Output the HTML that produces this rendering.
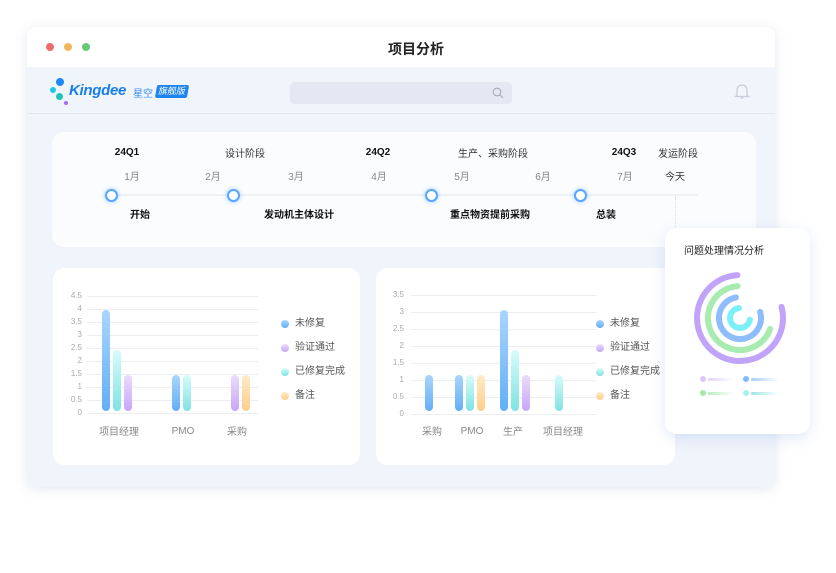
<!DOCTYPE html>
<html><head><meta charset="utf-8"><style>
*{margin:0;padding:0;box-sizing:border-box}
body{width:836px;height:573px;background:#fff;position:relative;overflow:hidden;font-family:"Liberation Sans","Noto Sans CJK SC",sans-serif}
.a{position:absolute}
.t{position:absolute;white-space:nowrap;transform:translateX(-50%);font-size:10px;color:#333;line-height:12px}
.b{font-weight:bold;color:#111}
.m{color:#888}
.ax{position:absolute;font-size:8px;color:#aaa;text-align:right;width:20px;line-height:8px}
.gl{position:absolute;height:1px;background:#eceef2}
.bar{position:absolute;width:8px;border-radius:4px}
.bl{background:linear-gradient(#a9d6fb,#62aef7)}
.cy{background:linear-gradient(#d8fbfb,#7ee3e2)}
.pu{background:linear-gradient(#ebdcfb,#c7a6f9)}
.or{background:linear-gradient(#ffebc8,#ffcd8a)}
.lg{position:absolute;font-size:10px;color:#555;line-height:12px;white-space:nowrap}
.dot{position:absolute;width:8px;height:8px;border-radius:50%}
.xl{position:absolute;font-size:10px;color:#888;transform:translateX(-50%);white-space:nowrap;line-height:14px;height:14px}
.c{position:absolute;width:13px;height:13px;border-radius:50%;background:#fff;border:2px solid #58a6ff;box-shadow:0 0 5px #9cc9ff}
</style></head><body>
<div class="a" style="left:27px;top:27px;width:748px;height:460px;background:#f0f4fb;border-radius:8px;box-shadow:0 2px 12px rgba(120,140,180,.2);overflow:hidden">
 <div class="a" style="left:0;top:0;width:748px;height:40px;background:#fff"></div>
 <div class="a" style="left:19px;top:16px;width:8px;height:8px;border-radius:50%;background:#ef6a6a"></div>
 <div class="a" style="left:37px;top:16px;width:8px;height:8px;border-radius:50%;background:#f2b55b"></div>
 <div class="a" style="left:55px;top:16px;width:8px;height:8px;border-radius:50%;background:#66c974"></div>
 <div class="a" style="left:361px;top:12px;font-size:14px;font-weight:bold;color:#222">项目分析</div>
 <div class="a" style="left:0;top:86px;width:748px;height:1px;background:#e2e7f0"></div>
 <div class="a" style="left:263px;top:55px;width:222px;height:22px;border-radius:5px;background:#e3e8f2"></div>
 <svg class="a" style="left:465px;top:60px" width="12" height="12"><circle cx="5" cy="5" r="3.8" fill="none" stroke="#aab" stroke-width="1.1"/><path d="M8 8L11 11" stroke="#aab" stroke-width="1.1"/></svg>
 <svg class="a" style="left:707px;top:55px" width="16" height="18"><path d="M3 13V8a5 5 0 0 1 10 0v5l1.5 1.5h-13z M6.5 16h3" fill="none" stroke="#c8cfdc" stroke-width="1.3"/></svg>
</div>
<!-- logo -->
<div class="a" style="left:56px;top:78px;width:8px;height:8px;border-radius:50%;background:#1e88f3"></div>
<div class="a" style="left:50px;top:87px;width:6px;height:6px;border-radius:50%;background:#20c6e6"></div>
<div class="a" style="left:56px;top:93px;width:7px;height:7px;border-radius:50%;background:#1ec4b8"></div>
<div class="a" style="left:64px;top:101px;width:4px;height:4px;border-radius:50%;background:#a86bf2"></div>
<div class="a" style="left:69px;top:82px;font-size:15px;font-weight:bold;font-style:italic;color:#1a7ee8;letter-spacing:-.3px">Kingdee</div>
<div class="a" style="left:133px;top:85px;font-size:10px;color:#3b8fe8">星空</div>
<div class="a" style="left:156px;top:85px;width:32px;height:13px;background:#1e84ee;border-radius:2px;transform:skewX(-10deg);font-size:9px;color:#fff;text-align:center;line-height:13px">旗舰版</div>
<!-- timeline card -->
<div class="a" style="left:52px;top:132px;width:704px;height:115px;background:#fbfcfe;border-radius:12px"></div>
<div class="a" style="left:110px;top:194px;width:588px;height:2px;background:#eef1f6"></div>
<div class="a" style="left:675px;top:196px;width:0;height:52px;border-left:1px dotted #dde"></div>
<div class="c" style="left:105px;top:189px"></div>
<div class="c" style="left:227px;top:189px"></div>
<div class="c" style="left:425px;top:189px"></div>
<div class="c" style="left:574px;top:189px"></div>
<div class="t b" style="left:127px;top:147px">24Q1</div>
<div class="t" style="left:245px;top:149px">设计阶段</div>
<div class="t b" style="left:378px;top:147px">24Q2</div>
<div class="t" style="left:493px;top:149px">生产、采购阶段</div>
<div class="t b" style="left:624px;top:147px">24Q3</div>
<div class="t" style="left:678px;top:149px">发运阶段</div>
<div class="t m" style="left:132px;top:172px">1月</div>
<div class="t m" style="left:213px;top:172px">2月</div>
<div class="t m" style="left:296px;top:172px">3月</div>
<div class="t m" style="left:379px;top:172px">4月</div>
<div class="t m" style="left:462px;top:172px">5月</div>
<div class="t m" style="left:543px;top:172px">6月</div>
<div class="t m" style="left:625px;top:172px">7月</div>
<div class="t" style="left:675px;top:172px">今天</div>
<div class="t b" style="left:140px;top:210px">开始</div>
<div class="t b" style="left:299px;top:210px">发动机主体设计</div>
<div class="t b" style="left:490px;top:210px">重点物资提前采购</div>
<div class="t b" style="left:606px;top:210px">总装</div>
<!-- chart 1 -->
<div class="a" style="left:53px;top:268px;width:307px;height:197px;background:#fff;border-radius:12px"></div>
<div class="gl" style="left:87px;top:296px;width:172px"></div><div class="ax" style="left:62px;top:292px">4.5</div>
<div class="gl" style="left:87px;top:309px;width:172px"></div><div class="ax" style="left:62px;top:305px">4</div>
<div class="gl" style="left:87px;top:322px;width:172px"></div><div class="ax" style="left:62px;top:318px">3.5</div>
<div class="gl" style="left:87px;top:335px;width:172px"></div><div class="ax" style="left:62px;top:331px">3</div>
<div class="gl" style="left:87px;top:348px;width:172px"></div><div class="ax" style="left:62px;top:344px">2.5</div>
<div class="gl" style="left:87px;top:361px;width:172px"></div><div class="ax" style="left:62px;top:357px">2</div>
<div class="gl" style="left:87px;top:374px;width:172px"></div><div class="ax" style="left:62px;top:370px">1.5</div>
<div class="gl" style="left:87px;top:387px;width:172px"></div><div class="ax" style="left:62px;top:383px">1</div>
<div class="gl" style="left:87px;top:400px;width:172px"></div><div class="ax" style="left:62px;top:396px">0.5</div>
<div class="gl" style="left:87px;top:413px;width:172px"></div><div class="ax" style="left:62px;top:409px">0</div>
<div class="bar bl" style="left:102px;top:310px;height:101px"></div>
<div class="bar cy" style="left:113px;top:350px;height:61px"></div>
<div class="bar pu" style="left:124px;top:375px;height:36px"></div>
<div class="bar bl" style="left:172px;top:375px;height:36px"></div>
<div class="bar cy" style="left:183px;top:375px;height:36px"></div>
<div class="bar pu" style="left:231px;top:375px;height:36px"></div>
<div class="bar or" style="left:242px;top:375px;height:36px"></div>
<div class="xl" style="left:119px;top:426px">项目经理</div>
<div class="xl" style="left:183px;top:424px;padding-top:1px">PMO</div>
<div class="xl" style="left:237px;top:426px">采购</div>
<div class="dot bl" style="left:281px;top:320px"></div><div class="lg" style="left:295px;top:318px">未修复</div>
<div class="dot pu" style="left:281px;top:344px"></div><div class="lg" style="left:295px;top:342px">验证通过</div>
<div class="dot cy" style="left:281px;top:368px"></div><div class="lg" style="left:295px;top:366px">已修复完成</div>
<div class="dot or" style="left:281px;top:392px"></div><div class="lg" style="left:295px;top:390px">备注</div>
<!-- chart 2 -->
<div class="a" style="left:376px;top:268px;width:299px;height:197px;background:#fff;border-radius:12px"></div>
<div class="gl" style="left:411px;top:295px;width:185px"></div><div class="ax" style="left:384px;top:291px">3.5</div>
<div class="gl" style="left:411px;top:312px;width:185px"></div><div class="ax" style="left:384px;top:308px">3</div>
<div class="gl" style="left:411px;top:329px;width:185px"></div><div class="ax" style="left:384px;top:325px">2.5</div>
<div class="gl" style="left:411px;top:346px;width:185px"></div><div class="ax" style="left:384px;top:342px">2</div>
<div class="gl" style="left:411px;top:363px;width:185px"></div><div class="ax" style="left:384px;top:359px">1.5</div>
<div class="gl" style="left:411px;top:380px;width:185px"></div><div class="ax" style="left:384px;top:376px">1</div>
<div class="gl" style="left:411px;top:397px;width:185px"></div><div class="ax" style="left:384px;top:393px">0.5</div>
<div class="gl" style="left:411px;top:414px;width:185px"></div><div class="ax" style="left:384px;top:410px">0</div>
<div class="bar bl" style="left:425px;top:375px;height:36px"></div>
<div class="bar bl" style="left:455px;top:375px;height:36px"></div>
<div class="bar cy" style="left:466px;top:375px;height:36px"></div>
<div class="bar or" style="left:477px;top:375px;height:36px"></div>
<div class="bar bl" style="left:500px;top:310px;height:101px"></div>
<div class="bar cy" style="left:511px;top:350px;height:61px"></div>
<div class="bar pu" style="left:522px;top:375px;height:36px"></div>
<div class="bar cy" style="left:555px;top:375px;height:36px"></div>
<div class="xl" style="left:432px;top:426px">采购</div>
<div class="xl" style="left:472px;top:424px;padding-top:1px">PMO</div>
<div class="xl" style="left:513px;top:426px">生产</div>
<div class="xl" style="left:563px;top:426px">项目经理</div>
<div class="dot bl" style="left:596px;top:320px"></div><div class="lg" style="left:610px;top:318px">未修复</div>
<div class="dot pu" style="left:596px;top:344px"></div><div class="lg" style="left:610px;top:342px">验证通过</div>
<div class="dot cy" style="left:596px;top:368px"></div><div class="lg" style="left:610px;top:366px">已修复完成</div>
<div class="dot or" style="left:596px;top:392px"></div><div class="lg" style="left:610px;top:390px">备注</div>
<!-- popup -->
<div class="a" style="left:665px;top:228px;width:145px;height:206px;background:#fff;border-radius:12px;box-shadow:0 4px 14px rgba(110,150,220,.22)"></div>
<div class="a" style="left:684px;top:242px;font-size:10px;color:#222">问题处理情况分析</div>
<svg class="a" style="left:690px;top:268px" width="100" height="100" viewBox="0 0 100 100">
 <g fill="none" stroke-width="6" stroke-linecap="round">
  <circle cx="50" cy="50" r="43" stroke="#c1a3fa" stroke-dasharray="211 400" transform="rotate(-15 50 50)"/>
  <circle cx="50" cy="50" r="32" stroke="#a7ecae" stroke-dasharray="137 400" transform="rotate(20 50 50)"/>
  <circle cx="50" cy="50" r="21" stroke="#8fbcfb" stroke-dasharray="101 400" transform="rotate(-17 50 50)"/>
  <circle cx="50" cy="50" r="10" stroke="#7df0f7" stroke-dasharray="44 400" transform="rotate(10 50 50)"/>
 </g>
</svg>
<div class="dot" style="left:700px;top:376px;width:6px;height:6px;background:#dcc6fb"></div><div class="a" style="left:708px;top:378px;width:26px;height:3px;border-radius:2px;background:linear-gradient(90deg,#e2d3fb,#fff)"></div>
<div class="dot" style="left:743px;top:376px;width:6px;height:6px;background:#7fbaf8"></div><div class="a" style="left:751px;top:378px;width:28px;height:3px;border-radius:2px;background:linear-gradient(90deg,#a8d0fb,#fff)"></div>
<div class="dot" style="left:700px;top:390px;width:6px;height:6px;background:#a3eba9"></div><div class="a" style="left:708px;top:392px;width:26px;height:3px;border-radius:2px;background:linear-gradient(90deg,#b5efba,#fff)"></div>
<div class="dot" style="left:743px;top:390px;width:6px;height:6px;background:#a6f0f0"></div><div class="a" style="left:751px;top:392px;width:28px;height:3px;border-radius:2px;background:linear-gradient(90deg,#9ce5e2,#fff)"></div>
</body></html>
